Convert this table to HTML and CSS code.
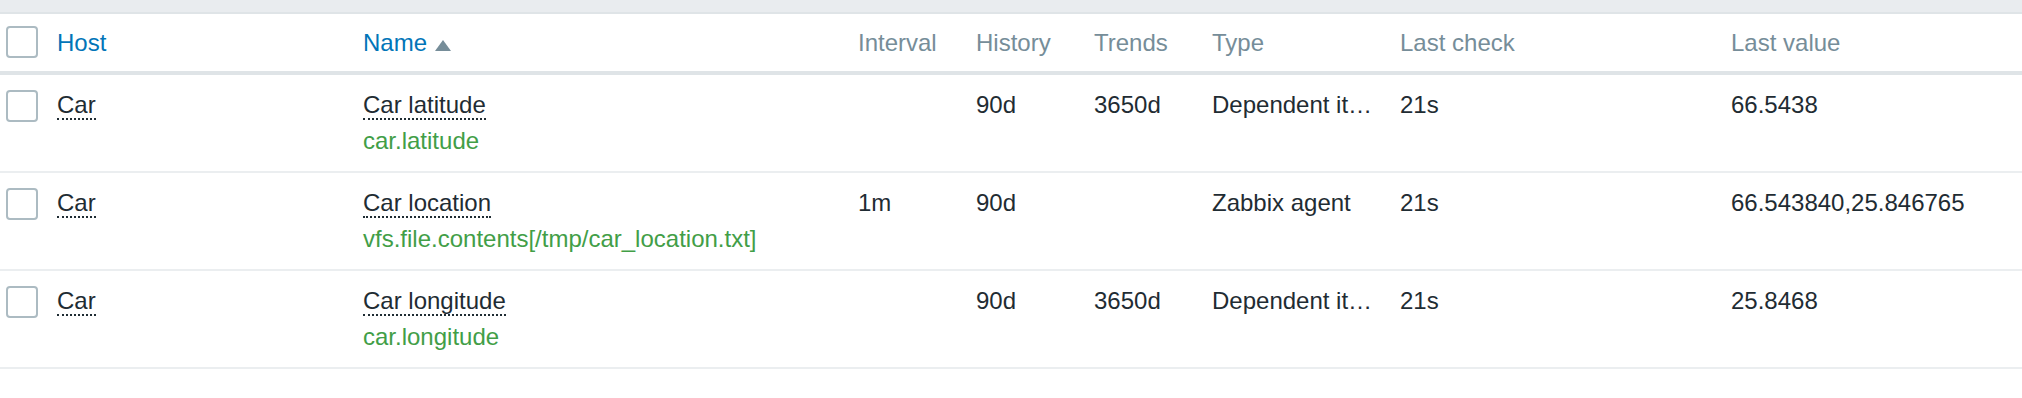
FILE: index.html
```html
<!DOCTYPE html>
<html>
<head>
<meta charset="utf-8">
<link rel="stylesheet" href="styles.css">
</head>
<body>
<div class="topband"></div>
<table class="list">
  <colgroup>
    <col class="c-check"><col class="c-host"><col class="c-name"><col class="c-num"><col class="c-num"><col class="c-num"><col class="c-type"><col class="c-check-time"><col class="c-value">
  </colgroup>
  <thead>
    <tr>
      <th class="cb-cell"><span class="checkbox"></span></th>
      <th><a class="sort-link">Host</a></th>
      <th><a class="sort-link">Name</a><span class="arrow-up"></span></th>
      <th>Interval</th>
      <th>History</th>
      <th>Trends</th>
      <th>Type</th>
      <th>Last check</th>
      <th>Last value</th>
    </tr>
  </thead>
  <tbody>
    <tr>
      <td class="cb-cell"><span class="checkbox"></span></td>
      <td><a class="link-action">Car</a></td>
      <td><a class="link-action">Car latitude</a><div class="green">car.latitude</div></td>
      <td></td>
      <td>90d</td>
      <td>3650d</td>
      <td><div class="trunc">Dependent item</div></td>
      <td>21s</td>
      <td>66.5438</td>
    </tr>
    <tr>
      <td class="cb-cell"><span class="checkbox"></span></td>
      <td><a class="link-action">Car</a></td>
      <td><a class="link-action">Car location</a><div class="green">vfs.file.contents[/tmp/car_location.txt]</div></td>
      <td>1m</td>
      <td>90d</td>
      <td></td>
      <td><div class="trunc">Zabbix agent</div></td>
      <td>21s</td>
      <td>66.543840,25.846765</td>
    </tr>
    <tr>
      <td class="cb-cell"><span class="checkbox"></span></td>
      <td><a class="link-action">Car</a></td>
      <td><a class="link-action">Car longitude</a><div class="green">car.longitude</div></td>
      <td></td>
      <td>90d</td>
      <td>3650d</td>
      <td><div class="trunc">Dependent item</div></td>
      <td>21s</td>
      <td>25.8468</td>
    </tr>
  </tbody>
</table>
</body>
</html>
```
FILE: styles.css
```css
html, body {
  margin: 0;
  padding: 0;
  background: #ffffff;
}
body {
  font-family: "Liberation Sans", Arial, sans-serif;
  font-size: 24px;
  color: #1f2c33;
  width: 2022px;
}
.topband {
  height: 12px;
  background: #e9ecef;
  border-bottom: 2px solid #dfe4e7;
}
.list {
  width: 2022px;
  border-collapse: collapse;
  table-layout: fixed;
}
.c-check { width: 47px; }
.c-host { width: 306px; }
.c-name { width: 495px; }
.c-num { width: 118px; }
.c-type { width: 188px; }
.c-check-time { width: 331px; }
.c-value { width: 301px; }

.list th {
  text-align: left;
  font-weight: normal;
  color: #768d99;
  line-height: 36px;
  padding: 11px 10px 10px 10px;
  border-bottom: 4px solid #dfe4e7;
  white-space: nowrap;
  vertical-align: top;
}
.list td {
  line-height: 36px;
  padding: 12px 10px 12px 10px;
  border-bottom: 2px solid #ebeef0;
  vertical-align: top;
  white-space: nowrap;
}
.list th.cb-cell, .list td.cb-cell {
  padding-left: 6px;
  padding-right: 0;
}
.list th.cb-cell .checkbox {
  margin-top: 1px;
}
.list td.cb-cell .checkbox {
  margin-top: 3px;
}
.checkbox {
  display: block;
  box-sizing: border-box;
  width: 32px;
  height: 32px;
  border: 2px solid #acbbc2;
  border-radius: 4px;
  background: #ffffff;
}
.sort-link {
  color: #0275b8;
}
.arrow-up {
  display: inline-block;
  width: 0;
  height: 0;
  margin-left: 8px;
  border-left: 8px solid transparent;
  border-right: 8px solid transparent;
  border-bottom: 11px solid #768d99;
}
.link-action {
  color: #1f2c33;
  border-bottom: 2px dotted #1f2c33;
}
.green {
  color: #429e47;
}
.trunc {
  max-width: 166px;
  overflow: hidden;
  text-overflow: ellipsis;
  white-space: nowrap;
}
```
